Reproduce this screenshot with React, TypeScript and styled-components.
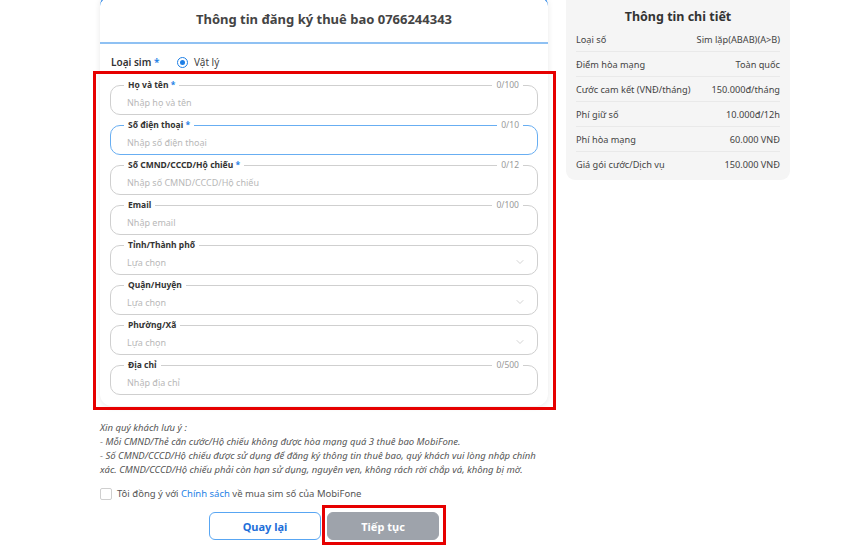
import React from 'react';
import styled, { createGlobalStyle } from 'styled-components';
import { ChevronDown } from 'lucide-react';

const GlobalStyle = createGlobalStyle`
  body {
    margin: 0;
    background: #ffffff;
    font-family: "Noto Sans", "Open Sans", sans-serif;
    color: #333;
  }
`;

const Page = styled.div`
  display: flex;
  align-items: flex-start;
  gap: 18px;
  padding-left: 100px;
  width: 850px;
  height: 550px;
  box-sizing: border-box;
  overflow: hidden;
`;

const LeftColumn = styled.div`
  width: 448px;
  display: flex;
  flex-direction: column;
`;

const Card = styled.div`
  margin-top: -6px;
  background: #fff;
  border-top: 3px solid #1e7fe6;
  border-radius: 12px;
  box-shadow: 0 1px 6px rgba(0, 0, 0, 0.09);
`;

const CardHeader = styled.div`
  height: 47px;
  display: flex;
  align-items: center;
  justify-content: center;
  border-bottom: 2px solid #8fc1f3;
  font-size: 13px;
  font-weight: 700;
  color: #444;
  padding-bottom: 1px;
  box-sizing: border-box;
`;

const CardBody = styled.div`
  padding: 6px 10px 11px 10px;
`;

const SimRow = styled.div`
  display: flex;
  align-items: center;
  height: 24px;
  padding-left: 1px;
  margin-bottom: 11px;
  font-size: 10px;
`;

const SimLabel = styled.span`
  width: 66px;
  font-weight: 600;
  color: #333;
`;

const Star = styled.span`
  color: #1e7fe6;
`;

const Radio = styled.span`
  width: 9px;
  height: 9px;
  border: 1px solid #1e7fe6;
  border-radius: 50%;
  display: inline-flex;
  align-items: center;
  justify-content: center;
  margin-right: 6px;

  &::after {
    content: '';
    width: 5px;
    height: 5px;
    border-radius: 50%;
    background: #1e7fe6;
  }
`;

const RadioText = styled.span`
  color: #444;
`;

const FieldsArea = styled.div`
  position: relative;
  display: flex;
  flex-direction: column;
  gap: 10px;
`;

const Highlight = styled.div<{ $t: number; $r: number; $b: number; $l: number }>`
  position: absolute;
  top: ${({ $t }) => $t}px;
  right: ${({ $r }) => $r}px;
  bottom: ${({ $b }) => $b}px;
  left: ${({ $l }) => $l}px;
  border: 3px solid #e60000;
  pointer-events: none;
`;

const FieldBox = styled.div<{ $focused?: boolean }>`
  position: relative;
  height: 30px;
  border: 1px solid ${({ $focused }) => ($focused ? '#68aef2' : '#cfcfcf')};
  border-radius: 10px;
  display: flex;
  align-items: center;
  padding: 4px 11px 0 16px;
  box-sizing: border-box;
`;

const FieldLabel = styled.span`
  position: absolute;
  top: -7px;
  left: 13px;
  padding: 0 4px;
  background: #fff;
  font-size: 8.5px;
  font-weight: 700;
  color: #333;
  line-height: 12px;
`;

const Counter = styled.span`
  position: absolute;
  top: -7px;
  right: 14px;
  padding: 0 4px;
  background: #fff;
  font-size: 8.5px;
  color: #999;
  line-height: 12px;
`;

const Placeholder = styled.span`
  flex: 1;
  font-size: 9px;
  color: #b8b8b8;
`;

const Chevron = styled(ChevronDown)`
  color: #c4c4c4;
`;

const Notes = styled.div`
  margin-top: 15px;
  font-size: 9.5px;
  font-style: italic;
  line-height: 14px;
  color: #555;
`;

const AgreeRow = styled.div`
  display: flex;
  align-items: center;
  gap: 5px;
  margin-top: 10px;
  font-size: 9.5px;
  color: #555;
`;

const CheckBox = styled.span`
  width: 10px;
  height: 10px;
  border: 1px solid #cfcfcf;
  border-radius: 2px;
`;

const PolicyLink = styled.span`
  color: #1e7fe6;
`;

const ButtonRow = styled.div`
  display: flex;
  justify-content: center;
  gap: 6px;
  margin-top: 12px;
`;

const ButtonWrap = styled.div`
  position: relative;
`;

const ActionButton = styled.button<{ $primary?: boolean }>`
  width: 112px;
  height: 28px;
  border-radius: 6px;
  font-family: inherit;
  font-size: 11px;
  font-weight: 700;
  border: 1px solid ${({ $primary }) => ($primary ? '#9ea3ab' : '#58a6f3')};
  background: ${({ $primary }) => ($primary ? '#9ea3ab' : '#fff')};
  color: ${({ $primary }) => ($primary ? '#fff' : '#1e6fd9')};
`;

const DetailPanel = styled.div`
  width: 224px;
  padding: 0 10px 3px;
  background: #f5f5f5;
  border-radius: 0 0 9px 9px;
  box-sizing: border-box;
`;

const DetailTitle = styled.div`
  text-align: center;
  font-size: 12.5px;
  font-weight: 700;
  color: #333;
  height: 27px;
  padding-top: 5px;
  line-height: 24px;
  box-sizing: border-box;
`;

const DetailRow = styled.div<{ $last?: boolean }>`
  display: flex;
  justify-content: space-between;
  align-items: center;
  height: 25px;
  box-sizing: border-box;
  border-bottom: ${({ $last }) => ($last ? 'none' : '1px solid #e9e9e9')};
  font-size: 9.2px;
  color: #444;
`;

const fields = [
  { label: 'Họ và tên', required: true, counter: '0/100', placeholder: 'Nhập họ và tên' },
  { label: 'Số điện thoại', required: true, counter: '0/10', placeholder: 'Nhập số điện thoại', focused: true },
  { label: 'Số CMND/CCCD/Hộ chiếu', required: true, counter: '0/12', placeholder: 'Nhập số CMND/CCCD/Hộ chiếu' },
  { label: 'Email', counter: '0/100', placeholder: 'Nhập email' },
  { label: 'Tỉnh/Thành phố', placeholder: 'Lựa chọn', select: true },
  { label: 'Quận/Huyện', placeholder: 'Lựa chọn', select: true },
  { label: 'Phường/Xã', placeholder: 'Lựa chọn', select: true },
  { label: 'Địa chỉ', counter: '0/500', placeholder: 'Nhập địa chỉ' },
];

const details = [
  ['Loại số', 'Sim lặp(ABAB)(A>B)'],
  ['Điểm hòa mạng', 'Toàn quốc'],
  ['Cước cam kết (VNĐ/tháng)', '150.000đ/tháng'],
  ['Phí giữ số', '10.000đ/12h'],
  ['Phí hòa mạng', '60.000 VNĐ'],
  ['Giá gói cước/Dịch vụ', '150.000 VNĐ'],
];

export default function App() {
  return (
    <>
      <GlobalStyle />
      <Page>
        <LeftColumn>
          <Card>
            <CardHeader>Thông tin đăng ký thuê bao 0766244343</CardHeader>
            <CardBody>
              <SimRow>
                <SimLabel>
                  Loại sim <Star>*</Star>
                </SimLabel>
                <Radio />
                <RadioText>Vật lý</RadioText>
              </SimRow>
              <FieldsArea>
                {fields.map((f) => (
                  <FieldBox key={f.label} $focused={f.focused}>
                    <FieldLabel>
                      {f.label}
                      {f.required && <Star> *</Star>}
                    </FieldLabel>
                    {f.counter && <Counter>{f.counter}</Counter>}
                    <Placeholder>{f.placeholder}</Placeholder>
                    {f.select && <Chevron size={12} strokeWidth={1.5} />}
                  </FieldBox>
                ))}
                <Highlight $t={-14} $r={-18} $b={-15} $l={-17} />
              </FieldsArea>
            </CardBody>
          </Card>

          <Notes>
            Xin quý khách lưu ý :
            <br />- Mỗi CMND/Thẻ căn cước/Hộ chiếu không được hòa mạng quá 3 thuê bao MobiFone.
            <br />- Số CMND/CCCD/Hộ chiếu được sử dụng để đăng ký thông tin thuê bao, quý khách vui lòng nhập chính
            xác. CMND/CCCD/Hộ chiếu phải còn hạn sử dụng, nguyên vẹn, không rách rời chắp vá, không bị mờ.
          </Notes>

          <AgreeRow>
            <CheckBox />
            <span>
              Tôi đồng ý với <PolicyLink>Chính sách</PolicyLink> về mua sim số của MobiFone
            </span>
          </AgreeRow>

          <ButtonRow>
            <ActionButton>Quay lại</ActionButton>
            <ButtonWrap>
              <ActionButton $primary>Tiếp tục</ActionButton>
              <Highlight $t={-7} $r={-7} $b={-5} $l={-5} />
            </ButtonWrap>
          </ButtonRow>
        </LeftColumn>

        <DetailPanel>
          <DetailTitle>Thông tin chi tiết</DetailTitle>
          {details.map(([k, v], i) => (
            <DetailRow key={k} $last={i === details.length - 1}>
              <span>{k}</span>
              <span>{v}</span>
            </DetailRow>
          ))}
        </DetailPanel>
      </Page>
    </>
  );
}
